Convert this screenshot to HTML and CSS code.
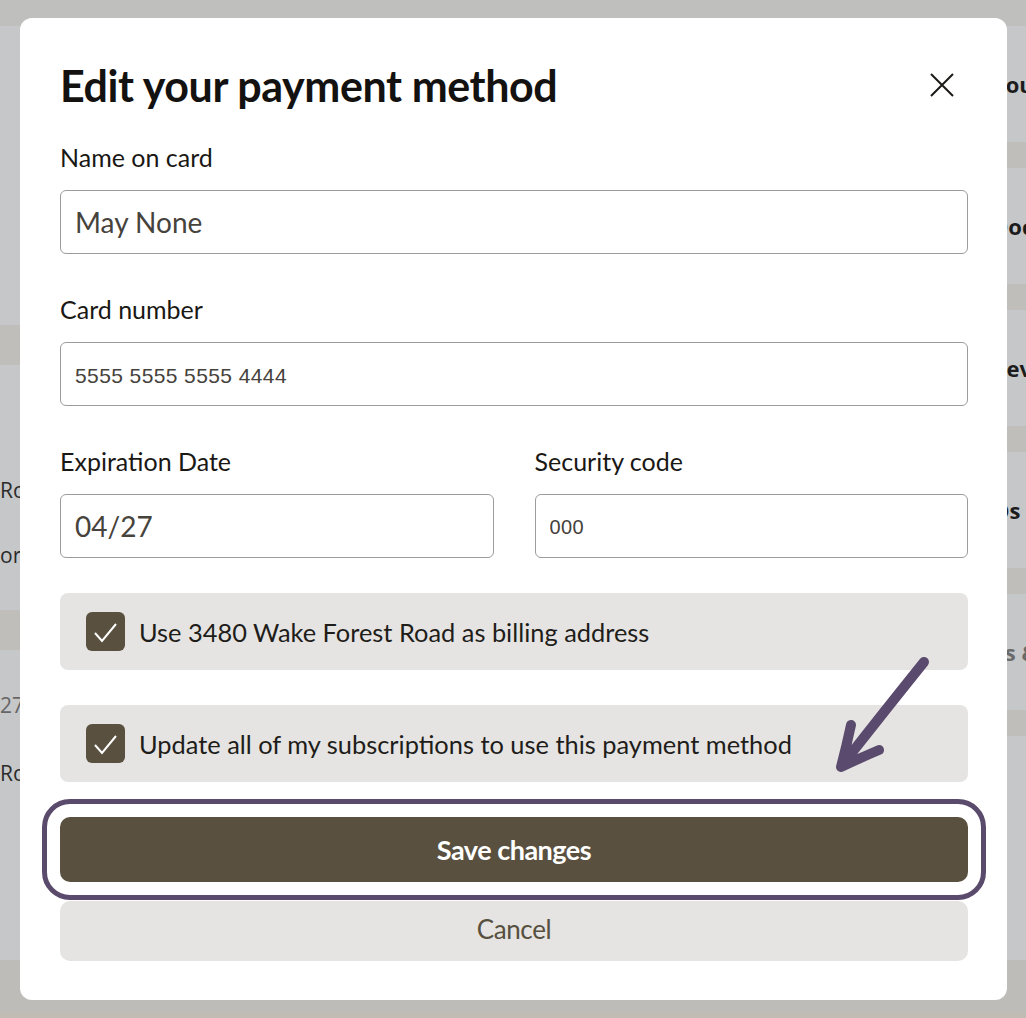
FILE: index.html
```html
<!DOCTYPE html>
<html lang="en">
<head>
    <meta charset="UTF-8">
    <meta name="viewport" content="width=device-width, initial-scale=1.0">
    <title>Edit your payment method</title>
    <link rel="stylesheet" href="styles.css">
</head>
<body>
    <!-- page behind the dialog, dimmed -->
    <div class="page" aria-hidden="true">
        <div class="page-top"></div>
        <div class="page-body">
            <div class="page-left">
                <div class="left-first"></div>
                <div class="band band-wide"></div>
                <div class="left-block">
                    <p class="addr">Road</p>
                    <p class="addr">orest</p>
                </div>
                <div class="band band-wide"></div>
                <div class="left-block left-last">
                    <p class="addr muted">27</p>
                    <p class="addr">Road</p>
                </div>
            </div>
            <div class="page-right">
                <div class="section"><span>You</span></div>
                <div class="band"></div>
                <div class="section"><span>Doc</span></div>
                <div class="band"></div>
                <div class="section"><span>Rev</span></div>
                <div class="band"></div>
                <div class="section"><span>Os</span></div>
                <div class="band"></div>
                <div class="section muted"><span>Ts &amp;</span></div>
                <div class="band"></div>
            </div>
        </div>
        <div class="page-bottom"></div>
    </div>

    <div class="modal" role="dialog" aria-labelledby="modalTitle">
        <div class="modal-head">
            <h1 class="modal-title" id="modalTitle">Edit your payment method</h1>
            <button class="close" type="button" aria-label="Close">
                <svg width="24" height="24" viewBox="0 0 24 24">
                    <path d="M1 1 L23 23 M23 1 L1 23" stroke="#1c1a17" stroke-width="2" fill="none"/>
                </svg>
            </button>
        </div>

        <form class="form">
            <div class="fields">
                <label class="field">
                    <span class="field-label">Name on card</span>
                    <input class="input" type="text" value="May None">
                </label>
                <label class="field">
                    <span class="field-label">Card number</span>
                    <input class="input input-plain" type="text" value="5555 5555 5555 4444">
                </label>
                <div class="field-row">
                    <label class="field">
                        <span class="field-label">Expiration Date</span>
                        <input class="input" type="text" value="04/27">
                    </label>
                    <label class="field">
                        <span class="field-label">Security code</span>
                        <input class="input input-plain input-short" type="text" value="000">
                    </label>
                </div>
            </div>

            <label class="check-row">
                <span class="check">
                    <svg width="39" height="39" viewBox="0 0 39 39">
                        <polyline points="9,21 16,29 30,12" stroke="#fff" stroke-width="2" fill="none"/>
                    </svg>
                </span>
                <span>Use 3480 Wake Forest Road as billing address</span>
            </label>

            <label class="check-row">
                <span class="check">
                    <svg width="39" height="39" viewBox="0 0 39 39">
                        <polyline points="9,21 16,29 30,12" stroke="#fff" stroke-width="2" fill="none"/>
                    </svg>
                </span>
                <span>Update all of my subscriptions to use this payment method</span>
            </label>

            <div class="actions">
                <button class="btn btn-primary" type="button">Save changes</button>
                <button class="btn btn-secondary" type="button">Cancel</button>
            </div>
        </form>

        <!-- hand-drawn annotation arrow -->
        <svg class="annot-arrow" width="110" height="130" viewBox="0 0 110 130">
            <path d="M94 12 Q57 58 13 114 M21 75 Q16 98 11 117 Q30 108 49 100"
                  stroke="#5a4a6d" stroke-width="10" fill="none" stroke-linecap="round" stroke-linejoin="round"/>
        </svg>
    </div>
</body>
</html>
```

FILE: styles.css
```css
:root {
    --brown: #595040;
    --grey-box: #e5e4e2;
    --purple: #5a4a6c;
    --ink: #1a1815;
}

body {
    margin: 0;
    font-family: Lato, "Noto Sans", sans-serif;
    color: var(--ink);
}

/* background page */
.page {
    height: 1018px;
    overflow: hidden;
    background: #c6c7c9;
    display: flex;
    flex-direction: column;
}

.page-top {
    height: 26px;
    background: #bfbfbd;
}

.page-body {
    flex: 1;
    display: grid;
    grid-template-columns: 992px 1fr;
}

.page-left,
.page-right {
    display: flex;
    flex-direction: column;
}

.band {
    height: 26px;
    flex: none;
    background: #bfbebb;
}

.band-wide {
    height: 40px;
}

.left-first {
    height: 299px;
    flex: none;
}

.left-block {
    height: 245px;
    flex: none;
    padding-top: 110px;
    box-sizing: border-box;
}

.left-last {
    height: auto;
    flex: 1;
    padding-top: 40px;
}

.addr {
    margin: 0 0 35px;
    font-family: "Open Sans", sans-serif;
    font-size: 21px;
    line-height: 30px;
    color: #2b2b2b;
}

.left-last .addr {
    margin-bottom: 38px;
}

.addr.muted {
    color: #666;
}

.section {
    height: 116px;
    flex: none;
    display: flex;
    align-items: center;
    font-family: "Open Sans", sans-serif;
    font-weight: 700;
    font-size: 22px;
    white-space: nowrap;
    color: #1c1c1c;
}

.section.muted {
    color: #6a6a6a;
}

.page-bottom {
    height: 58px;
    background: linear-gradient(#bdbcb9 85%, #c2bbb1);
}

/* dialog */
.modal {
    position: absolute;
    left: 20px;
    top: 18px;
    width: 987px;
    height: 982px;
    box-sizing: border-box;
    padding: 40px 39px 40px 40px;
    background: #fff;
    border-radius: 12px;
}

.modal-head {
    height: 54px;
    display: flex;
    align-items: center;
    justify-content: space-between;
    margin-bottom: 30px;
}

.modal-title {
    margin: 0;
    font-size: 43px;
    font-weight: 700;
    letter-spacing: -0.4px;
    color: #141210;
}

.close {
    border: 0;
    background: none;
    padding: 0;
    margin-right: 14px;
    display: flex;
}

.form {
    display: flex;
    flex-direction: column;
    gap: 35px;
}

.fields {
    display: flex;
    flex-direction: column;
    gap: 40px;
}

.field {
    display: flex;
    flex-direction: column;
    gap: 18px;
}

.field-row {
    display: grid;
    grid-template-columns: 1fr 1fr;
    gap: 41px;
}

.field-label {
    font-size: 25px;
    line-height: 30px;
    color: var(--ink);
}

.input {
    height: 64px;
    box-sizing: border-box;
    border: 1.5px solid #9c9c9c;
    border-radius: 6px;
    padding: 0 14px;
    font-family: Lato, sans-serif;
    font-size: 28px;
    color: #46423c;
    background: #fff;
    outline: none;
}

.input-plain {
    font-family: "Liberation Sans", Arial, sans-serif;
    font-size: 21px;
    letter-spacing: 0.4px;
    padding-top: 3px;
}

.input-short {
    font-size: 20px;
}

.check-row {
    height: 77px;
    display: flex;
    align-items: center;
    gap: 14px;
    padding-left: 26px;
    background: var(--grey-box);
    border-radius: 8px;
    font-size: 25.4px;
    color: #1f1d1a;
}

.check {
    width: 39px;
    height: 39px;
    flex: none;
    border-radius: 6px;
    background: var(--brown);
    display: flex;
}

.actions {
    display: flex;
    flex-direction: column;
    gap: 19px;
}

.btn {
    border: 0;
    border-radius: 10px;
    font-family: Lato, sans-serif;
    font-size: 26px;
    cursor: pointer;
}

.btn-primary {
    height: 65px;
    background: var(--brown);
    color: #fff;
    font-size: 27px;
    font-weight: 700;
    letter-spacing: -0.5px;
    outline: 5px solid var(--purple);
    outline-offset: 13px;
}

.btn-secondary {
    height: 60px;
    padding-bottom: 6px;
    background: var(--grey-box);
    color: #57503f;
    letter-spacing: -0.4px;
}

.annot-arrow {
    position: absolute;
    left: 810px;
    top: 632px;
}
```
